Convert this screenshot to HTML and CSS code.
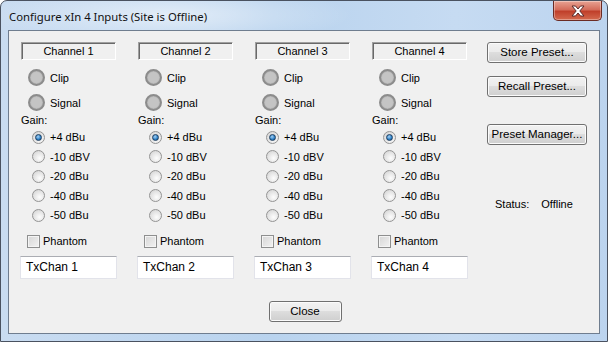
FILE: index.html
```html
<!DOCTYPE html>
<html>
<head>
<link rel="stylesheet" href="styles.css">
</head>
<body>
<div class="window">
	<div class="titlebar">
		<span class="title">Configure xIn 4 Inputs (Site is Offline)</span>
		<span class="close-x">
			<svg width="16" height="12" viewBox="0 0 16 12"><path d="M2 1h3.5L8 4l2.5-3H14l-4.2 5L14 11h-3.5L8 8l-2.5 3H2l4.2-5z" fill="#fff" stroke="#5a2a2a" stroke-width="1"/></svg>
		</span>
	</div>

	<div class="client">
		<div class="main">
			<div class="channels">
				<div class="chan">
					<div class="chan-name">Channel 1</div>
					<div class="led-row"><span class="led"></span>Clip</div>
					<div class="led-row"><span class="led"></span>Signal</div>
					<div class="gain">Gain:</div>
					<div class="opt"><span class="radio on"></span>+4 dBu</div>
					<div class="opt"><span class="radio"></span>-10 dBV</div>
					<div class="opt"><span class="radio"></span>-20 dBu</div>
					<div class="opt"><span class="radio"></span>-40 dBu</div>
					<div class="opt"><span class="radio"></span>-50 dBu</div>
					<div class="phantom"><span class="check"></span>Phantom</div>
					<div class="txt">TxChan 1</div>
				</div>
				<div class="chan">
					<div class="chan-name">Channel 2</div>
					<div class="led-row"><span class="led"></span>Clip</div>
					<div class="led-row"><span class="led"></span>Signal</div>
					<div class="gain">Gain:</div>
					<div class="opt"><span class="radio on"></span>+4 dBu</div>
					<div class="opt"><span class="radio"></span>-10 dBV</div>
					<div class="opt"><span class="radio"></span>-20 dBu</div>
					<div class="opt"><span class="radio"></span>-40 dBu</div>
					<div class="opt"><span class="radio"></span>-50 dBu</div>
					<div class="phantom"><span class="check"></span>Phantom</div>
					<div class="txt">TxChan 2</div>
				</div>
				<div class="chan">
					<div class="chan-name">Channel 3</div>
					<div class="led-row"><span class="led"></span>Clip</div>
					<div class="led-row"><span class="led"></span>Signal</div>
					<div class="gain">Gain:</div>
					<div class="opt"><span class="radio on"></span>+4 dBu</div>
					<div class="opt"><span class="radio"></span>-10 dBV</div>
					<div class="opt"><span class="radio"></span>-20 dBu</div>
					<div class="opt"><span class="radio"></span>-40 dBu</div>
					<div class="opt"><span class="radio"></span>-50 dBu</div>
					<div class="phantom"><span class="check"></span>Phantom</div>
					<div class="txt">TxChan 3</div>
				</div>
				<div class="chan">
					<div class="chan-name">Channel 4</div>
					<div class="led-row"><span class="led"></span>Clip</div>
					<div class="led-row"><span class="led"></span>Signal</div>
					<div class="gain">Gain:</div>
					<div class="opt"><span class="radio on"></span>+4 dBu</div>
					<div class="opt"><span class="radio"></span>-10 dBV</div>
					<div class="opt"><span class="radio"></span>-20 dBu</div>
					<div class="opt"><span class="radio"></span>-40 dBu</div>
					<div class="opt"><span class="radio"></span>-50 dBu</div>
					<div class="phantom"><span class="check"></span>Phantom</div>
					<div class="txt">TxChan 4</div>
				</div>
			</div>

			<div class="side">
				<div class="btn">Store Preset...</div>
				<div class="btn recall">Recall Preset...</div>
				<div class="btn manager">Preset Manager...</div>
				<div class="status"><span>Status:</span><span>Offline</span></div>
			</div>
		</div>

		<div class="footer">
			<div class="btn close">Close</div>
		</div>
	</div>
</div>
</body>
</html>
```

FILE: styles.css
```css
body {
	margin: 0;
	font-family: "Liberation Sans", Arial, sans-serif;
	font-size: 11px;
	color: #000;
}

.window {
	width: 606px;
	height: 340px;
	border: 1px solid #4a5260;
	border-radius: 7px 7px 0 0;
	display: flex;
	flex-direction: column;
	background:
		radial-gradient(ellipse 180px 30px at 170px 14px, rgba(255,255,255,.55), rgba(255,255,255,0)),
		linear-gradient(to right, #c9dcf1, #b9d3ee 45%, #c6dbf2 75%, #bcd4ef);
}

.titlebar {
	height: 29px;
	display: flex;
	align-items: flex-start;
}
.title {
	font-family: "Noto Sans", "Open Sans", sans-serif;
	font-size: 11.3px;
	color: #111;
	margin: 8px 0 0 8px;
}
.close-x {
	margin-left: auto;
	margin-right: 5px;
	width: 47px;
	height: 19px;
	border: 1px solid #6b2b24;
	border-top: 0;
	border-radius: 0 0 5px 5px;
	background: linear-gradient(#e8a393, #d46d5b 45%, #c0402b 55%, #d46a4f);
	display: flex;
	align-items: center;
	justify-content: center;
	box-shadow: inset 0 0 0 1px rgba(255,255,255,.35);
}

.client {
	flex: 1;
	margin: 0 7px 7px;
	border: 1px solid #6f7d8f;
	background: #f0f0f0;
}

.main {
	display: flex;
	padding: 11px 0 0 11px;
}
.channels {
	display: flex;
	gap: 20px;
}
.chan {
	width: 97px;
}
.chan-name {
	height: 16px;
	line-height: 16px;
	text-align: center;
	border: 1px solid;
	border-color: #a0a0a0 #fff #fff #a0a0a0;
	box-shadow: inset 1px 1px 0 #696969;
	margin-left: 1px;
	width: 93px;
}

.led-row {
	display: flex;
	align-items: center;
	height: 17px;
	margin-top: 8px;
}
.chan-name + .led-row {
	margin-top: 9px;
}
.led {
	width: 13px;
	height: 13px;
	margin: 0 5px 0 8px;
	border-radius: 50%;
	background: #c4c4c4;
	border: 2px solid #8c8c8c;
	box-shadow: inset 0 0 1px #777;
}

.gain {
	line-height: 14px;
	margin-top: 2px;
	padding-left: 1px;
}

.opt {
	display: flex;
	align-items: center;
	height: 19.5px;
}
.gain + .opt {
	margin-top: .5px;
}
.radio {
	position: relative;
	width: 11px;
	height: 11px;
	margin: 0 5px 0 12px;
	border-radius: 50%;
	border: 1px solid #949494;
	background: radial-gradient(circle at 60% 65%, #fdfdfd, #e4e4e4 55%, #cdcdcd);
}
.radio.on::after {
	content: "";
	position: absolute;
	left: 2px;
	top: 2px;
	width: 5px;
	height: 5px;
	border-radius: 50%;
	border: 1px solid #1d3e60;
	background: radial-gradient(circle at 40% 35%, #a6d2f5, #2a7ec5 60%, #134a7c);
}

.phantom {
	display: flex;
	align-items: center;
	height: 14px;
	margin-top: 9px;
}
.check {
	width: 11px;
	height: 11px;
	margin: 0 3px 0 7px;
	border: 1px solid #8e8f8f;
	background: linear-gradient(135deg, #d6d6d6, #f2f2f2);
	box-shadow: inset 0 0 0 1px #f4f4f4;
}

.txt {
	margin-top: 8px;
	height: 21px;
	line-height: 21px;
	padding-left: 5px;
	background: #fff;
	border: 1px solid #e2e3ea;
	border-top-color: #abadb3;
	font-size: 12px;
}

.side {
	margin-left: 19px;
	width: 100px;
}
.btn {
	height: 19px;
	line-height: 19px;
	text-align: center;
	border: 1px solid #707070;
	border-radius: 3px;
	background: linear-gradient(#f2f2f2, #ebebeb 45%, #dddddd 50%, #cfcfcf);
	box-shadow: inset 0 0 0 1px #fbfbfb;
	font-size: 11.5px;
}
.recall {
	margin-top: 13px;
}
.manager {
	margin-top: 27px;
}
.status {
	margin-top: 52px;
	line-height: 14px;
	padding-left: 8px;
	display: flex;
	gap: 12px;
}

.footer {
	display: flex;
	justify-content: center;
	margin-top: 22px;
}
.close {
	width: 71px;
	margin-left: 2px;
}
```
